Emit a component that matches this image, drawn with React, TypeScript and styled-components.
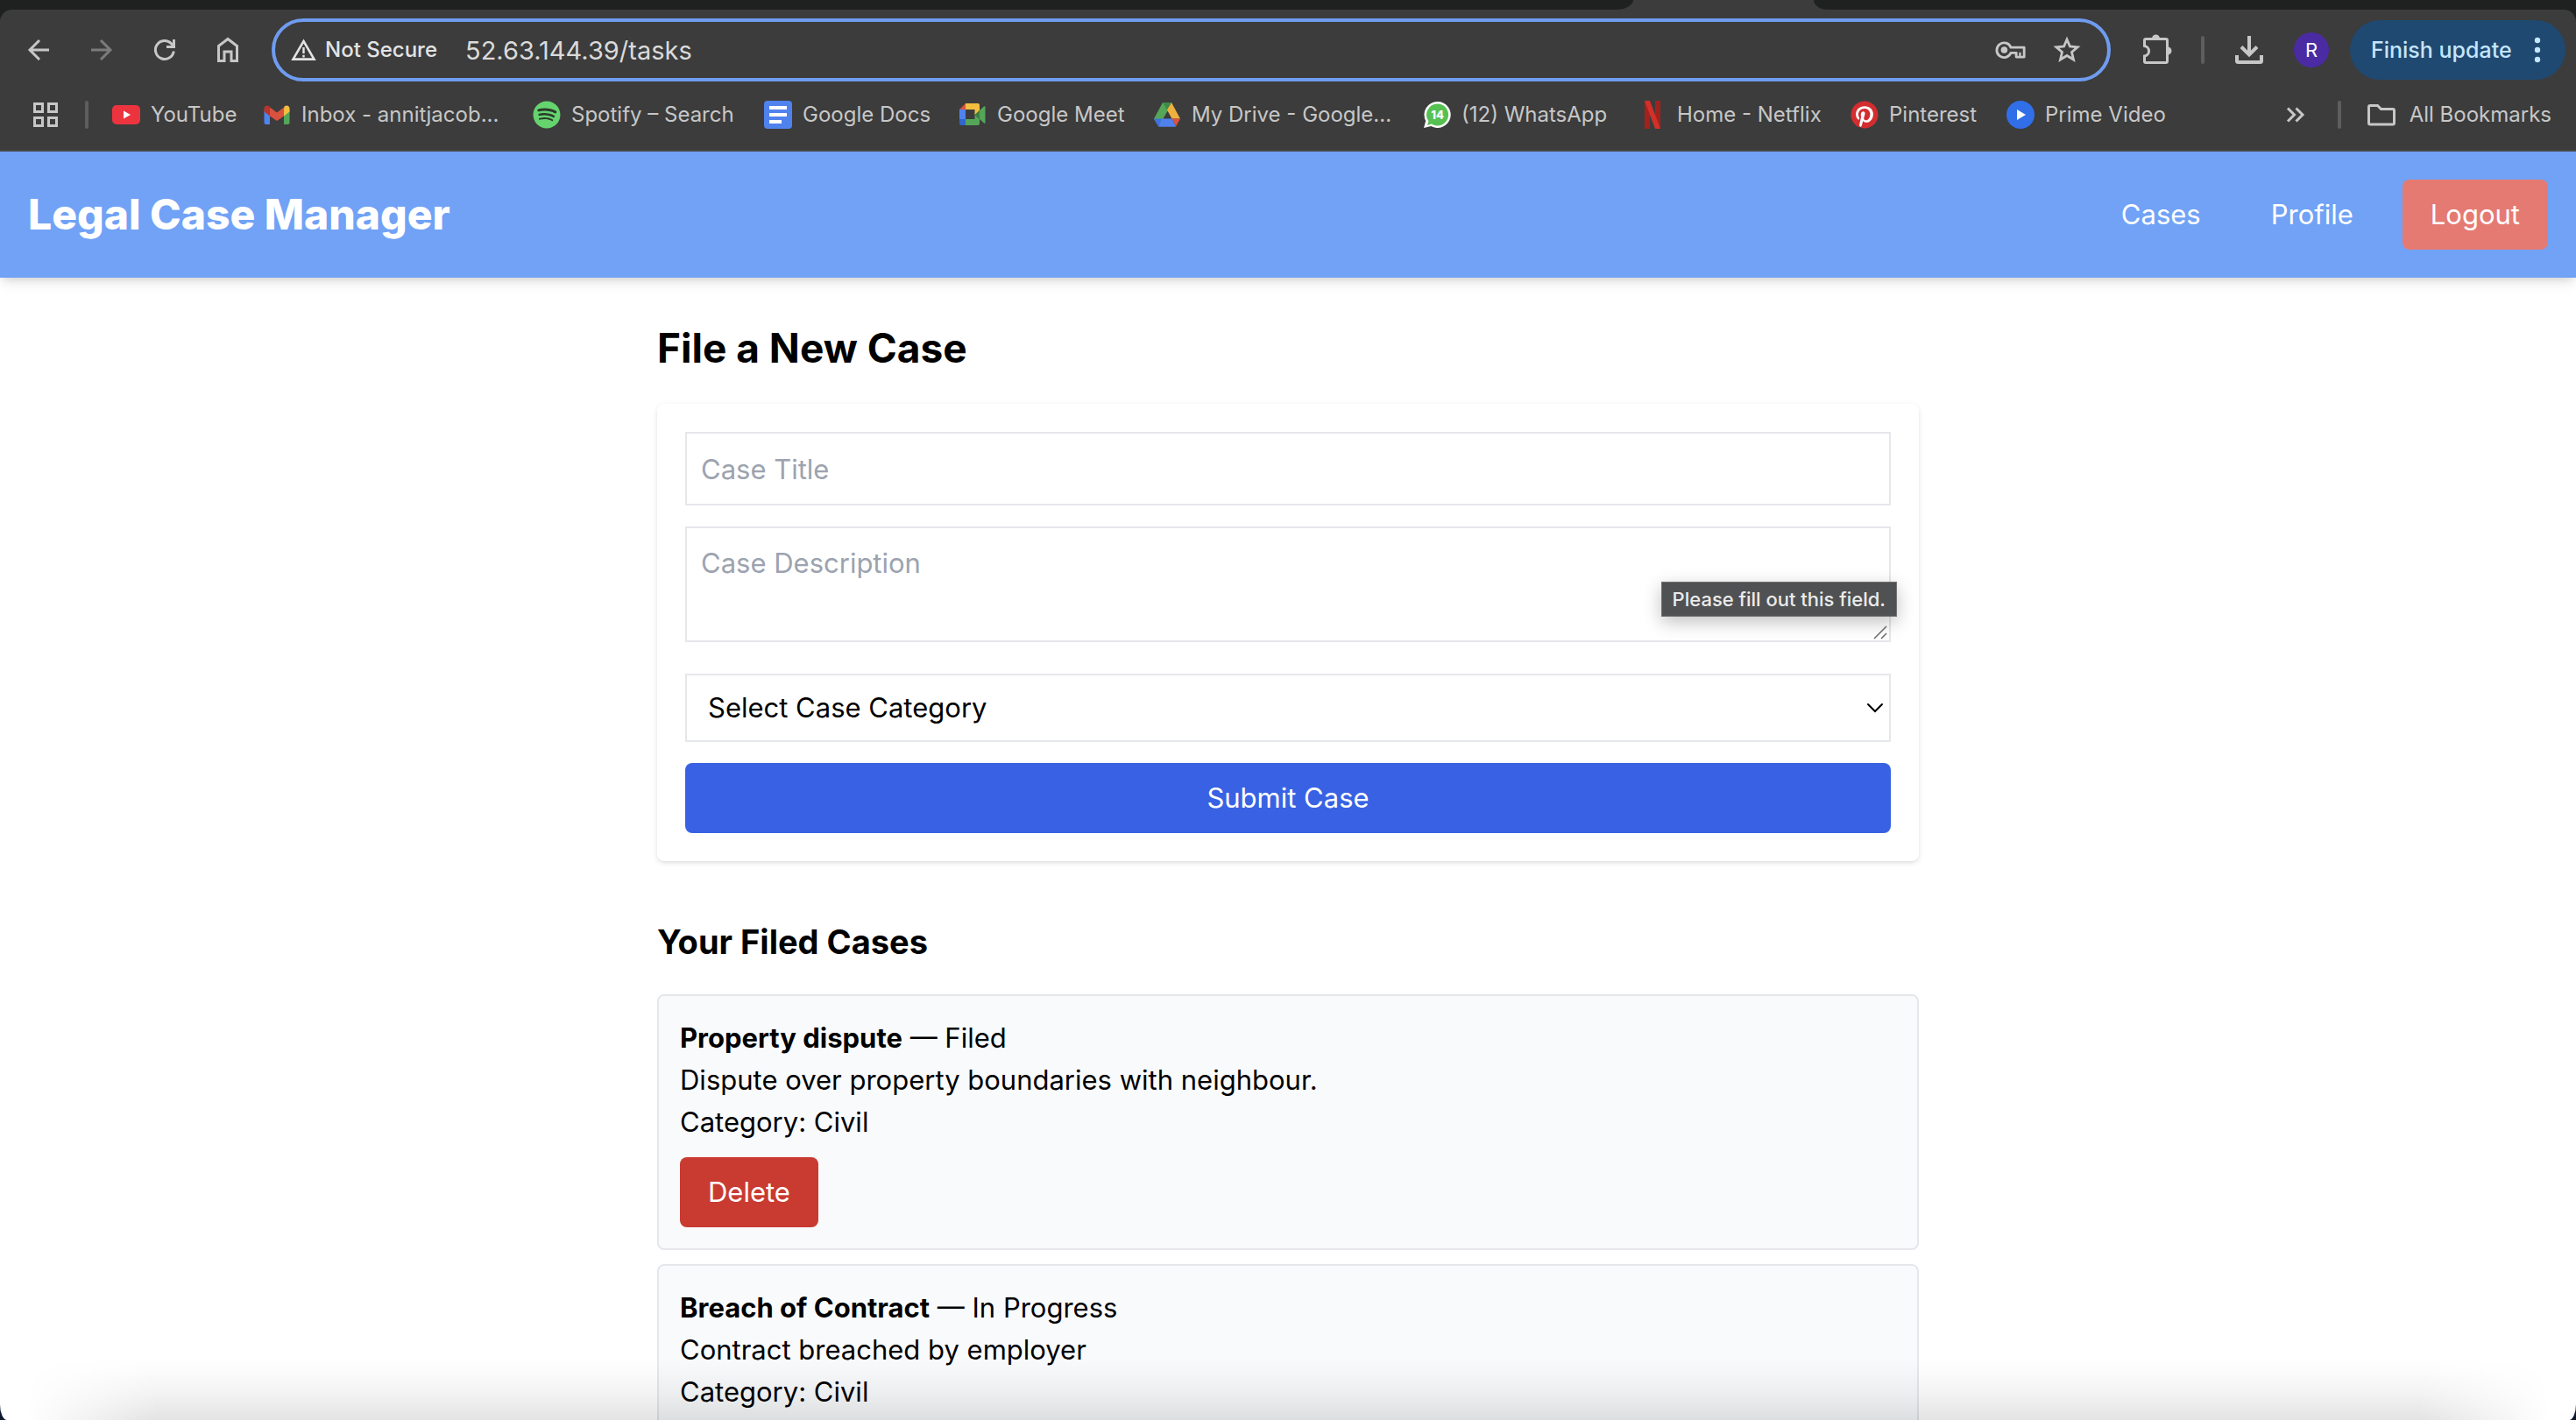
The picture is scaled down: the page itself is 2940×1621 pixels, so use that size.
import React from "react";
import styled, { createGlobalStyle, css } from "styled-components";
import { FaPinterest, FaSpotify } from "react-icons/fa";

const GlobalStyle = createGlobalStyle`
  *, *::before, *::after { box-sizing: border-box; }
  html, body, #root { height: 100%; }
  body {
    margin: 0;
    background: #0c1830;
    color: #000;
    font-family: Inter, "Liberation Sans", sans-serif;
    font-size: 31px;
    line-height: 48px;
  }
  button, input, select, textarea { font: inherit; color: inherit; margin: 0; }
  h1, h2, p, ul { margin: 0; padding: 0; }
  a { color: inherit; text-decoration: none; }
`;

const Window = styled.div`
  position: relative;
  display: flex;
  flex-direction: column;
  height: 100vh;
  overflow: hidden;
  background: #fff;
  border-radius: 0 0 8px 8px / 0 0 18px 18px;
`;

/* ---------- Browser chrome ---------- */

const Chrome = styled.header`
  flex: none;
  background: #1f2120;
  color: #c7c7c7;
  font-size: 24px;
  line-height: 32px;
`;

const TabStrip = styled.div`
  display: grid;
  grid-template-columns: 1864fr 206px 870fr;
  height: 11px;
  background: #3c3c3c;
`;

const TabGap = styled.span<{ $side: "left" | "right" }>`
  background: #1f2120;
  grid-column: ${(p) => (p.$side === "left" ? 1 : 3)};
  border-radius: ${(p) => (p.$side === "left" ? "0 0 20px 0 / 0 0 11px 0" : "0 0 0 16px / 0 0 0 11px")};
`;

const Bars = styled.div`
  background: #3c3c3c;
  border-radius: 14px 14px 0 0;
  border-bottom: 2px solid #474747;
`;

const Toolbar = styled.div`
  display: flex;
  align-items: center;
  height: 92px;
  padding: 0 12px 0 26px;
`;

const IconButton = styled.button<{ $dim?: boolean }>`
  display: flex;
  flex: none;
  align-items: center;
  justify-content: center;
  width: 36px;
  height: 36px;
  padding: 0;
  border: 0;
  background: none;
  color: ${(p) => (p.$dim ? "#7b7b7b" : "#c7c7c7")};
`;

const NavButtons = styled.div`
  display: flex;
  gap: 36px;
  margin-right: 32px;
`;

const Omnibox = styled.div`
  display: flex;
  flex: 1;
  align-items: center;
  height: 72px;
  padding: 0 28px 0 18px;
  border: 4px solid #6f9cf0;
  border-radius: 36px;
`;

const Security = styled.button`
  display: flex;
  align-items: center;
  gap: 10px;
  padding: 0;
  border: 0;
  background: none;
  color: #e3e3e3;
  font-weight: 500;
`;

const Address = styled.input`
  flex: 1;
  min-width: 0;
  height: 48px;
  margin-left: 32px;
  padding: 0;
  border: 0;
  outline: 0;
  background: none;
  color: #dadada;
  font-size: 29px;
`;

const OmniActions = styled.div`
  display: flex;
  gap: 28px;
`;

const ToolbarActions = styled.div`
  display: flex;
  align-items: center;
  gap: 33px;
  margin-left: 34px;
`;

const Divider = styled.span`
  flex: none;
  width: 4px;
  height: 32px;
  border-radius: 2px;
  background: #5e5e5e;
`;

const Avatar = styled.button`
  width: 40px;
  height: 40px;
  padding: 0;
  border: 0;
  border-radius: 50%;
  background: #4b2ba3;
  color: #fff;
  font-size: 22px;
`;

const UpdateButton = styled.button`
  display: flex;
  align-items: center;
  justify-content: space-between;
  width: 246px;
  height: 68px;
  margin-left: 24px;
  padding: 0 28px 0 24px;
  border: 0;
  border-radius: 34px;
  background: #1f4970;
  color: #c4e5fd;
  font-size: 25px;
  font-weight: 500;
  white-space: nowrap;
`;

const BookmarkBar = styled.nav`
  display: flex;
  align-items: center;
  gap: 27px;
  height: 68px;
  padding: 0 28px 12px 34px;
`;

const Bookmark = styled.a<{ $width?: number }>`
  display: flex;
  flex: none;
  align-items: center;
  gap: ${(p) => (p.$width ? 12 : 16)}px;
  width: ${(p) => (p.$width ? `${p.$width}px` : "auto")};
  white-space: nowrap;
`;

const BookmarkList = styled.div`
  display: flex;
  flex: 1;
  min-width: 0;
  overflow: hidden;
`;

const BookmarkEnd = styled.div`
  display: flex;
  align-items: center;
  gap: 30px;
`;

/* ---------- Application ---------- */

const Page = styled.div`
  flex: 1;
  min-height: 0;
  overflow: hidden;
`;

const AppBar = styled.header`
  display: flex;
  align-items: center;
  justify-content: space-between;
  padding: 32px;
  background: #71a2f6;
  color: #fff;
  box-shadow: 0 8px 12px -2px rgba(0, 0, 0, 0.1), 0 4px 8px -4px rgba(0, 0, 0, 0.12);
`;

const Brand = styled.h1`
  font-size: 48px;
  line-height: 64px;
  font-weight: 800;
`;

const AppLinks = styled.nav`
  display: flex;
  align-items: center;
  gap: 80px;
`;

const LinkGroup = styled.div`
  display: flex;
  align-items: center;
  gap: 56px;
`;

const Button = styled.button<{ $tone: "primary" | "danger" | "soft"; $block?: boolean }>`
  display: block;
  height: 80px;
  padding: 16px 32px;
  border: 0;
  border-radius: 8px;
  color: #fff;
  ${(p) => p.$block && css`width: 100%;`}
  background: ${(p) => ({ primary: "#3862e3", danger: "#c93a31", soft: "#e57a73" })[p.$tone]};
`;

const Main = styled.main`
  max-width: 1440px;
  margin: 0 auto;
  padding: 48px 0;
`;

const PageTitle = styled.h2`
  margin-bottom: 32px;
  font-size: 46px;
  line-height: 64px;
  font-weight: 700;
`;

const SectionTitle = styled.h2`
  margin: 64px 0 32px;
  font-size: 38px;
  line-height: 56px;
  font-weight: 700;
`;

const CaseForm = styled.form`
  display: flex;
  flex-direction: column;
  gap: 24px;
  padding: 32px;
  border-radius: 8px;
  background: #fff;
  box-shadow: 0 2px 6px rgba(0, 0, 0, 0.1), 0 2px 4px -2px rgba(0, 0, 0, 0.1);
`;

const field = css`
  display: block;
  width: 100%;
  border: 2px solid #e5e7eb;
  border-radius: 0;
  background: #fff;
  outline: 0;
  &::placeholder { color: #9ca3af; opacity: 1; }
`;

const TextField = styled.input`
  ${field}
  height: 84px;
  padding: 16px;
`;

const TextArea = styled.textarea`
  ${field}
  height: 132px;
  padding: 16px;
  resize: none;
  overflow: hidden;
`;

const TextAreaWrap = styled.div`
  position: relative;
  padding-bottom: 12px;
`;

const ResizeHandle = styled.svg`
  position: absolute;
  right: 4px;
  bottom: 15px;
  pointer-events: none;
`;

const Tooltip = styled.div`
  position: absolute;
  top: 63px;
  right: -7px;
  padding: 3px 12px;
  border: 1px solid #707172;
  background: #505152;
  color: #ebebeb;
  font-size: 22px;
  line-height: 32px;
  font-weight: 500;
  white-space: nowrap;
  box-shadow: 0 6px 20px rgba(0, 0, 0, 0.25);
`;

const SelectWrap = styled.div`
  position: relative;
`;

const Select = styled.select`
  ${field}
  height: 78px;
  padding: 0 64px 0 24px;
  appearance: none;
`;

const SelectArrow = styled.svg`
  position: absolute;
  top: 50%;
  right: 8px;
  margin-top: -8px;
  pointer-events: none;
`;

const CaseList = styled.ul`
  display: flex;
  flex-direction: column;
  gap: 16px;
  list-style: none;
`;

const CaseCard = styled.li`
  padding: 24px;
  border: 2px solid #e5e7eb;
  border-radius: 8px;
  background: #f9fafc;
`;

const CardActions = styled.div`
  margin-top: 16px;
`;

const BottomShade = styled.div`
  position: absolute;
  right: 0;
  bottom: 0;
  left: 0;
  height: 72px;
  pointer-events: none;
  background: linear-gradient(to top, rgba(0, 0, 0, 0.11), rgba(0, 0, 0, 0.05) 40%, rgba(0, 0, 0, 0.01) 80%, transparent);
  mask-image: linear-gradient(to right, transparent 30px, #000 180px, #000 calc(100% - 180px), transparent calc(100% - 30px));
`;

/* ---------- Icons ---------- */

type StrokeProps = { size?: number; w?: number; children: React.ReactNode };
const Stroke = ({ size = 36, w = 3, children }: StrokeProps) => (
  <svg width={size} height={size} viewBox={`0 0 ${size} ${size}`} fill="none" stroke="currentColor" strokeWidth={w} aria-hidden="true">
    {children}
  </svg>
);

const BackIcon = () => <Stroke><path d="M30 18H8M19 7 8 18l11 11" /></Stroke>;
const ForwardIcon = () => <Stroke><path d="M6 18h22M17 7l11 11-11 11" /></Stroke>;
const ReloadIcon = () => (
  <Stroke>
    <path d="M28.300 19.500A10.500 10.500 0 1 1 25.500 10.700l2 2.300" />
    <path d="M28.500 6v8.500H20" />
  </Stroke>
);
const HomeIcon = () => (
  <Stroke><path d="M7.500 13.500 18 5.500l10.500 8v17H22v-10.500h-8v10.500H7.500z" /></Stroke>
);
const WarningIcon = () => (
  <svg width="29" height="26" viewBox="0 0 29 26" fill="none" stroke="currentColor" strokeWidth="2.6" aria-hidden="true">
    <path d="M14.500 3 26.500 23.600H2.500z" />
    <path d="M14.500 10v7M14.500 18.800v2.700" strokeWidth="2.400" />
  </svg>
);
const KeyIcon = () => (
  <svg width="38" height="36" viewBox="0 0 38 36" fill="none" stroke="currentColor" strokeWidth="3" aria-hidden="true">
    <path d="M19 15a8.800 8.800 0 1 0 0 6.500h6.500v5h9.500V15z" strokeLinejoin="round" />
    <circle cx="11" cy="18" r="4" fill="currentColor" stroke="none" />
    <path d="M30 21v5" strokeWidth="2.500" />
  </svg>
);
const StarIcon = () => (
  <Stroke><path d="m18 6 3.400 8 8.700.8-6.600 5.700 2 8.500L18 24.500 10.500 29l2-8.500-6.600-5.700 8.700-.8z" strokeWidth="2.800" /></Stroke>
);
const PuzzleIcon = () => (
  <Stroke>
    <path d="M4.500 7a1.500 1.500 0 0 1 1.500-1.500h23A1.500 1.500 0 0 1 30.500 7v24a1.500 1.500 0 0 1-1.500 1.500H6A1.500 1.500 0 0 1 4.500 31v-6a5.800 5.800 0 0 0 0-11.500z" />
    <path d="M13 5a4.500 4.500 0 0 1 9 0zM31 14.500a4.500 4.500 0 0 1 0 9z" fill="currentColor" stroke="none" />
  </Stroke>
);
const DownloadIcon = () => (
  <Stroke w={4}>
    <path d="M18 2v21M9 14.500l9 9 9-9M4 24v6.500a1.500 1.500 0 0 0 1.500 1.500h25a1.500 1.500 0 0 0 1.500-1.500V24" />
  </Stroke>
);
const DotsIcon = () => (
  <svg width="8" height="30" viewBox="0 0 8 30" fill="currentColor" aria-hidden="true">
    <circle cx="4" cy="4" r="3.200" /><circle cx="4" cy="15" r="3.200" /><circle cx="4" cy="26" r="3.200" />
  </svg>
);
const GridIcon = () => (
  <Stroke><path d="M5.500 5.500h9v9h-9zM21.500 5.500h9v9h-9zM5.500 21.500h9v9h-9zM21.500 21.500h9v9h-9z" /></Stroke>
);
const MoreIcon = () => <Stroke size={24} w={3}><path d="m3 4.500 7.500 7.500L3 19.500M12.500 4.500 20 12l-7.500 7.500" /></Stroke>;
const FolderIcon = () => (
  <Stroke size={32} w={3}>
    <path d="M1.500 7A1.500 1.500 0 0 1 3 5.500h8.500l4 4H29a1.500 1.500 0 0 1 1.500 1.500v14.500A1.500 1.500 0 0 1 29 27H3a1.500 1.500 0 0 1-1.500-1.500z" />
  </Stroke>
);

const Logo = ({ children }: { children: React.ReactNode }) => (
  <svg width="32" height="32" viewBox="0 0 32 32" aria-hidden="true">{children}</svg>
);

const YouTubeLogo = () => (
  <Logo><rect y="5" width="32" height="22" rx="5" fill="#ec343f" /><path d="M13 11.500v9l8-4.500z" fill="#fff" /></Logo>
);
const GmailLogo = () => (
  <Logo>
    <path d="M1.500 10v15a2 2 0 0 0 2 2H8V13z" fill="#4f83ee" />
    <path d="M30.500 10v15a2 2 0 0 1-2 2H24V13z" fill="#55a658" />
    <path d="M24 9.500v8l6.500-5V9c0-3.500-3.500-4.500-6-2.500z" fill="#f3bd42" />
    <path d="M8 9.500v8l-6.500-5V9c0-3.500 3.500-4.500 6-2.500z" fill="#b8352c" />
    <path d="M8 17.500V7.500l8 6 8-6v10l-8 5.500z" fill="#db5140" />
  </Logo>
);
const DocsLogo = () => (
  <Logo>
    <rect width="32" height="32" rx="4" fill="#5082ee" />
    <path d="M6 6h20v4H6zM6 14h20v4H6zM6 22h14v4H6z" fill="#fff" />
  </Logo>
);
const MeetLogo = () => (
  <Logo>
    <path d="M1 10h7v11H1z" fill="#4f83ee" /><path d="M1 21h7v7H3a2 2 0 0 1-2-2z" fill="#3266cf" />
    <path d="M8 3v7H1z" fill="#db5140" />
    <path d="M8 3h14a2 2 0 0 1 2 2v6l-5.500 5.500V10H8z" fill="#f3bd42" />
    <path d="M8 21h10.500v-5L24 21v5a2 2 0 0 1-2 2H8z" fill="#55a658" />
    <path d="M18.500 16 24 11v10z" fill="#3e7f44" />
    <path d="m24 11 5-4.500c.8-.6 1.500-.3 1.500.6v17.800c0 .9-.7 1.200-1.500.6L24 21z" fill="#55a658" />
  </Logo>
);
const DriveLogo = () => (
  <Logo>
    <path d="M11 2h5l3 5.500L8 26.500 5.500 28 1 20.500z" fill="#55a658" />
    <path d="M11 2h10l-5 8.500z" fill="#3e8a48" />
    <path d="M21 2l10 18.500H21.500L16 10.500z" fill="#f0b03f" />
    <path d="M1 20.500h9.500L6 29.500z" fill="#3d72e0" />
    <path d="M31 20.500h-9.500l4.500 9z" fill="#db5140" />
    <path d="M10.500 20.500h11l4.500 9.200H6z" fill="#5082ee" />
  </Logo>
);
const LogoCount = styled.text`
  font-family: Inter, "Liberation Sans", sans-serif;
  font-size: 13px;
  font-weight: 800;
`;
const WhatsAppLogo = () => (
  <Logo>
    <path d="M16.500 1a15 15 0 1 1-7.300 28L1 31l2.200-8A15 15 0 0 1 16.500 1z" fill="#fff" />
    <path d="M16.500 3.500a12.500 12.500 0 1 1-6.700 23L5 28l1.400-4.800A12.500 12.500 0 0 1 16.500 3.500z" fill="#56c152" />
    <LogoCount x="16.500" y="20.500" textAnchor="middle" fill="#fff">14</LogoCount>
  </Logo>
);
const NetflixLogo = () => (
  <Logo>
    <path d="M7 0h6v32H7zM19 0h6v32h-6z" fill="#a3211d" />
    <path d="M7 0h6l12 32h-6z" fill="#d42f28" />
  </Logo>
);
const PrimeLogo = () => (
  <Logo><circle cx="16" cy="16" r="16" fill="#316fe9" /><path d="M12 10v12l10-6z" fill="#fff" /></Logo>
);
const RoundLogo = styled.span<{ $color: string; $back: string }>`
  display: flex;
  flex: none;
  border-radius: 50%;
  color: ${(p) => p.$color};
  background: radial-gradient(circle, ${(p) => p.$back} 0 14px, transparent 15px);
`;

const bookmarks = [
  { label: "YouTube", width: 172, icon: <YouTubeLogo /> },
  { label: "Inbox - annitjacob...", width: 308, icon: <GmailLogo /> },
  { label: "Spotify – Search", width: 264, icon: <RoundLogo $color="#65d46e" $back="#2c3a2e"><FaSpotify size={32} /></RoundLogo> },
  { label: "Google Docs", width: 222, icon: <DocsLogo /> },
  { label: "Google Meet", width: 222, icon: <MeetLogo /> },
  { label: "My Drive - Google...", width: 308, icon: <DriveLogo /> },
  { label: "(12) WhatsApp", width: 246, icon: <WhatsAppLogo /> },
  { label: "Home - Netflix", width: 242, icon: <NetflixLogo /> },
  { label: "Pinterest", width: 178, icon: <RoundLogo $color="#d32d30" $back="#fff"><FaPinterest size={32} /></RoundLogo> },
  { label: "Prime Video", width: 184, icon: <PrimeLogo /> },
];

const cases = [
  {
    title: "Property dispute",
    status: "Filed",
    text: "Dispute over property boundaries with neighbour.",
    category: "Civil",
  },
  {
    title: "Breach of Contract",
    status: "In Progress",
    text: "Contract breached by employer",
    category: "Civil",
  },
];

const BrowserChrome = () => (
  <Chrome>
    <TabStrip>
      <TabGap $side="left" />
      <TabGap $side="right" />
    </TabStrip>
    <Bars>
      <Toolbar>
        <NavButtons>
          <IconButton aria-label="Back"><BackIcon /></IconButton>
          <IconButton aria-label="Forward" $dim><ForwardIcon /></IconButton>
          <IconButton aria-label="Reload"><ReloadIcon /></IconButton>
          <IconButton aria-label="Home"><HomeIcon /></IconButton>
        </NavButtons>
        <Omnibox>
          <Security><WarningIcon />Not Secure</Security>
          <Address aria-label="Address" defaultValue="52.63.144.39/tasks" />
          <OmniActions>
            <IconButton aria-label="Passwords"><KeyIcon /></IconButton>
            <IconButton aria-label="Bookmark this page"><StarIcon /></IconButton>
          </OmniActions>
        </Omnibox>
        <ToolbarActions>
          <IconButton aria-label="Extensions"><PuzzleIcon /></IconButton>
          <Divider />
          <IconButton aria-label="Downloads"><DownloadIcon /></IconButton>
          <Avatar aria-label="Profile R">R</Avatar>
        </ToolbarActions>
        <UpdateButton>Finish update<DotsIcon /></UpdateButton>
      </Toolbar>
      <BookmarkBar aria-label="Bookmarks">
        <IconButton aria-label="Apps"><GridIcon /></IconButton>
        <Divider />
        <BookmarkList>
          {bookmarks.map((b) => (
            <Bookmark key={b.label} href="#" $width={b.width}>{b.icon}{b.label}</Bookmark>
          ))}
        </BookmarkList>
        <BookmarkEnd>
          <IconButton aria-label="More bookmarks"><MoreIcon /></IconButton>
          <Divider />
          <Bookmark href="#"><FolderIcon />All Bookmarks</Bookmark>
        </BookmarkEnd>
      </BookmarkBar>
    </Bars>
  </Chrome>
);

export default function App() {
  return (
    <>
      <GlobalStyle />
      <Window>
        <BrowserChrome />
        <Page>
          <AppBar>
            <Brand>Legal Case Manager</Brand>
            <LinkGroup>
              <AppLinks>
                <a href="#cases">Cases</a>
                <a href="#profile">Profile</a>
              </AppLinks>
              <Button $tone="soft" type="button">Logout</Button>
            </LinkGroup>
          </AppBar>
          <Main>
            <PageTitle>File a New Case</PageTitle>
            <CaseForm onSubmit={(e) => e.preventDefault()}>
              <TextField aria-label="Case Title" placeholder="Case Title" required />
              <TextAreaWrap>
                <TextArea aria-label="Case Description" placeholder="Case Description" required />
                <ResizeHandle width="16" height="16" viewBox="0 0 16 16" fill="none" stroke="#6b6b6b" strokeWidth="1.5" aria-hidden="true">
                  <path d="M1 15 15 1M9 15l6-6" />
                </ResizeHandle>
                <Tooltip role="tooltip">Please fill out this field.</Tooltip>
              </TextAreaWrap>
              <SelectWrap>
                <Select aria-label="Case Category" defaultValue="">
                  <option value="">Select Case Category</option>
                  <option value="civil">Civil</option>
                </Select>
                <SelectArrow width="20" height="16" viewBox="0 0 20 16" fill="none" stroke="#000" strokeWidth="2" strokeLinecap="round" aria-hidden="true">
                  <path d="m2 4 8 8 8-8" />
                </SelectArrow>
              </SelectWrap>
              <Button $tone="primary" $block type="submit">Submit Case</Button>
            </CaseForm>
            <SectionTitle>Your Filed Cases</SectionTitle>
            <CaseList>
              {cases.map((c) => (
                <CaseCard key={c.title}>
                  <p><strong>{c.title}</strong> — {c.status}</p>
                  <p>{c.text}</p>
                  <p>Category: {c.category}</p>
                  {c.status === "Filed" && (
                    <CardActions><Button $tone="danger" type="button">Delete</Button></CardActions>
                  )}
                </CaseCard>
              ))}
            </CaseList>
          </Main>
        </Page>
        <BottomShade />
      </Window>
    </>
  );
}
